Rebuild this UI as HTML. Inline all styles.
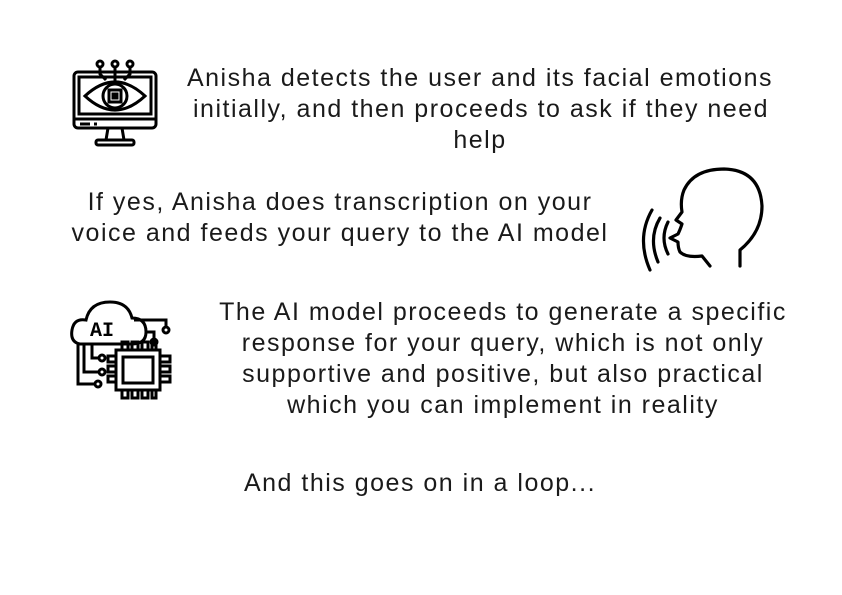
<!DOCTYPE html>
<html><head><meta charset="utf-8"><style>
body{margin:0;width:842px;height:595px;background:#fff;position:relative;overflow:hidden;font-family:"Liberation Sans",sans-serif;color:#1a1a1a}
.l{position:absolute;width:800px;text-align:center;font-size:25px;line-height:31px;letter-spacing:1.5px;white-space:nowrap}
svg{position:absolute}
</style></head><body>
<div class="l" style="left:80px;top:63px">Anisha detects the user and its facial emotions</div>
<div class="l" style="left:81px;top:94px">initially, and then proceeds to ask if they need</div>
<div class="l" style="left:80px;top:125px">help</div>
<div class="l" style="left:-60px;top:187px">If yes, Anisha does transcription on your</div>
<div class="l" style="left:-60px;top:218px">voice and feeds your query to the AI model</div>
<div class="l" style="left:103px;top:297px">The AI model proceeds to generate a specific</div>
<div class="l" style="left:103px;top:328px">response for your query, which is not only</div>
<div class="l" style="left:103px;top:359px">supportive and positive, but also practical</div>
<div class="l" style="left:103px;top:390px">which you can implement in reality</div>
<div class="l" style="left:20px;top:468px">And this goes on in a loop...</div>

<svg style="left:70px;top:58px" width="90" height="90" viewBox="0 0 90 90" fill="none" stroke="#000" stroke-width="3">
<rect x="4" y="14" width="82" height="56" rx="4"/>
<rect x="9" y="19" width="72" height="37"/>
<line x1="4" y1="61" x2="86" y2="61"/>
<line x1="10" y1="66" x2="20" y2="66"/><line x1="24" y1="66" x2="27" y2="66"/>
<path d="M38 70 L36 82 M52 70 L54 82"/><rect x="26" y="82" width="38" height="5" rx="2"/>
<path d="M15 38 Q45 10 75 38 Q45 66 15 38Z"/>
<circle cx="45" cy="38" r="12"/>
<rect x="39" y="32" width="12" height="12"/><rect x="43" y="36" width="4" height="4" fill="#000"/>
<circle cx="30" cy="6" r="3"/><circle cx="45" cy="6" r="3"/><circle cx="60" cy="6" r="3"/>
<path d="M45 9 V26 M30 9 V16 L36 22 M60 9 V16 L54 22"/>
</svg>

<svg style="left:636px;top:166px" width="130" height="108" viewBox="0 0 130 108" fill="none" stroke="#000" stroke-width="3.2" stroke-linecap="round" stroke-linejoin="round">
<path d="M104 100 L104 84 Q126 66 126 40 Q124 4 88 3 Q58 3 48 24 Q44 34 46 46 L40 54 L46 58 Q44 64 42 68 L34 72 L42 76 Q42 82 44 86 Q50 92 66 90 L74 100"/>
<path d="M24 52 Q12 72 22 96"/><path d="M16 44 Q0 72 14 104"/><path d="M32 56 Q24 72 32 88"/>
</svg>

<svg style="left:70px;top:298px" width="106" height="104" viewBox="0 0 106 104" fill="none" stroke="#000" stroke-width="3">
<path d="M10 46 Q0 44 2 32 Q4 20 16 22 Q20 4 40 4 Q58 4 62 20 Q76 20 76 34 Q76 46 62 46 Z"/>
<text x="20" y="38" font-family="Liberation Mono,monospace" font-size="20" font-weight="bold" fill="#000" stroke="none">AI</text>
<path d="M64 22 H96 V28"/><circle cx="96" cy="32" r="3"/>
<path d="M76 34 H84 V40"/><circle cx="84" cy="44" r="3"/>
<path d="M22 46 V60 H28"/><circle cx="32" cy="60" r="3"/>
<path d="M14 46 V74 H28"/><circle cx="32" cy="74" r="3"/>
<path d="M8 46 V86 H24"/><circle cx="28" cy="86" r="3"/>
<rect x="46" y="52" width="44" height="40"/><rect x="53" y="59" width="30" height="26"/>
<path d="M52 52 V44 H58 V52 M62 52 V44 H68 V52 M72 52 V44 H78 V52 M82 52 V44 H86 V52"/>
<path d="M52 92 V100 H58 V92 M62 92 V100 H68 V92 M72 92 V100 H78 V92 M82 92 V100 H86 V92"/>
<path d="M90 58 H100 V64 H90 M90 68 H100 V74 H90 M90 78 H100 V84 H90"/>
<path d="M46 58 H38 V64 H46 M46 68 H38 V74 H46 M46 78 H38 V84 H46"/>
</svg>
</body></html>
